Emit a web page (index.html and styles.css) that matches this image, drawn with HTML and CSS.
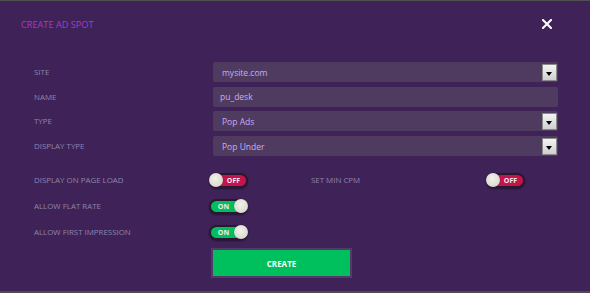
FILE: index.html
```html
<!DOCTYPE html>
<html lang="en">
<head>
    <meta charset="UTF-8">
    <meta name="viewport" content="width=device-width, initial-scale=1.0">
    <title>Create Ad Spot</title>
    <link rel="stylesheet" href="styles.css">
</head>
<body>
    <div class="modal">
        <div class="modal-header">
            <h1>CREATE AD SPOT</h1>
            <button class="close" aria-label="Close">
                <svg width="10" height="10" viewBox="0 0 10 10">
                    <path d="M1 1 L9 9 M9 1 L1 9" stroke="#fff" stroke-width="2" stroke-linecap="square"/>
                </svg>
            </button>
        </div>

        <div class="fields">
            <div class="field">
                <label>SITE</label>
                <div class="select">
                    <span>mysite.com</span>
                    <span class="arrow"></span>
                </div>
            </div>
            <div class="field">
                <label>NAME</label>
                <div class="input">pu_desk</div>
            </div>
            <div class="field">
                <label>TYPE</label>
                <div class="select">
                    <span>Pop Ads</span>
                    <span class="arrow"></span>
                </div>
            </div>
            <div class="field">
                <label>DISPLAY TYPE</label>
                <div class="select">
                    <span>Pop Under</span>
                    <span class="arrow"></span>
                </div>
            </div>
        </div>

        <div class="switches">
            <div class="switch-row">
                <label>DISPLAY ON PAGE LOAD</label>
                <div class="toggle off"><span class="knob"></span><span class="state">OFF</span></div>
                <label class="second">SET MIN CPM</label>
                <div class="toggle off"><span class="knob"></span><span class="state">OFF</span></div>
            </div>
            <div class="switch-row">
                <label>ALLOW FLAT RATE</label>
                <div class="toggle on"><span class="state">ON</span><span class="knob"></span></div>
            </div>
            <div class="switch-row">
                <label>ALLOW FIRST IMPRESSION</label>
                <div class="toggle on"><span class="state">ON</span><span class="knob"></span></div>
            </div>
        </div>

        <div class="actions">
            <button class="create">CREATE</button>
        </div>
    </div>
</body>
</html>
```

FILE: styles.css
```css
body {
    margin: 0;
    padding: 0;
    font-family: "Open Sans", sans-serif;
    background: #3f2358;
}

.modal {
    height: 293px;
    box-sizing: border-box;
    border-top: 1px solid #505050;
    border-bottom: 2px solid #4c4c4c;
    background: #3f2358;
}

.modal-header {
    display: flex;
    justify-content: space-between;
    align-items: center;
    height: 46px;
    padding: 0 38px 0 21px;
}

.modal-header h1 {
    margin: 0;
    font-size: 9.2px;
    font-weight: 400;
    color: #a43ac8;
}

.close {
    background: none;
    border: none;
    padding: 0;
    display: flex;
    cursor: pointer;
}

.fields {
    display: flex;
    flex-direction: column;
    gap: 4.7px;
    margin-top: 15px;
    padding-left: 34px;
}

.field {
    display: flex;
    align-items: center;
    height: 20px;
}

label {
    font-size: 7.9px;
    color: #8d84ac;
    width: 179px;
    flex-shrink: 0;
}

.input,
.select {
    width: 345px;
    height: 20px;
    box-sizing: border-box;
    background: #4e3b5f;
    border-radius: 2px;
    display: flex;
    align-items: center;
    justify-content: space-between;
    padding: 0 1px 0 9px;
    font-size: 8.5px;
    color: #cfa9f6;
}

.input {
    padding-left: 7px;
}

.arrow {
    width: 15px;
    height: 17px;
    box-sizing: border-box;
    border: 1px solid #8a8a8a;
    background: linear-gradient(#f4f4f4, #cfcfcf);
    position: relative;
}

.arrow::after {
    content: "";
    position: absolute;
    left: 3px;
    top: 7px;
    border-left: 3.5px solid transparent;
    border-right: 3.5px solid transparent;
    border-top: 4px solid #000;
}

.switches {
    display: flex;
    flex-direction: column;
    gap: 10px;
    margin-top: 16px;
    padding-left: 34px;
}

.switch-row {
    display: flex;
    align-items: center;
    height: 16px;
}

.switch-row label {
    width: 175px;
}

.switch-row label.second {
    margin-left: 63px;
}

.toggle {
    width: 39px;
    height: 15px;
    box-sizing: border-box;
    border: 2px solid #2a1833;
    border-radius: 8px;
    display: flex;
    align-items: center;
    box-shadow: 0 1px 2px rgba(0, 0, 0, 0.45);
}

.toggle.off {
    background: #c3144c;
}

.toggle.on {
    background: #00bf5d;
}

.knob {
    width: 14px;
    height: 14px;
    margin: -2px;
    border-radius: 50%;
    background: radial-gradient(circle at 45% 40%, #f2f2ea, #d0d0c6);
    box-shadow: 0 0 1px rgba(0, 0, 0, 0.5);
    flex-shrink: 0;
}

.state {
    flex: 1;
    text-align: center;
    font-size: 7px;
    font-weight: 700;
    color: #f4e8f0;
}

.actions {
    margin-top: 8px;
    padding-left: 211px;
}

.create {
    width: 141px;
    height: 30px;
    border: 2px solid #54396b;
    background: #00c05e;
    color: #f4fff8;
    font-family: "Open Sans", sans-serif;
    font-size: 8px;
    font-weight: 700;
    cursor: pointer;
}
```
